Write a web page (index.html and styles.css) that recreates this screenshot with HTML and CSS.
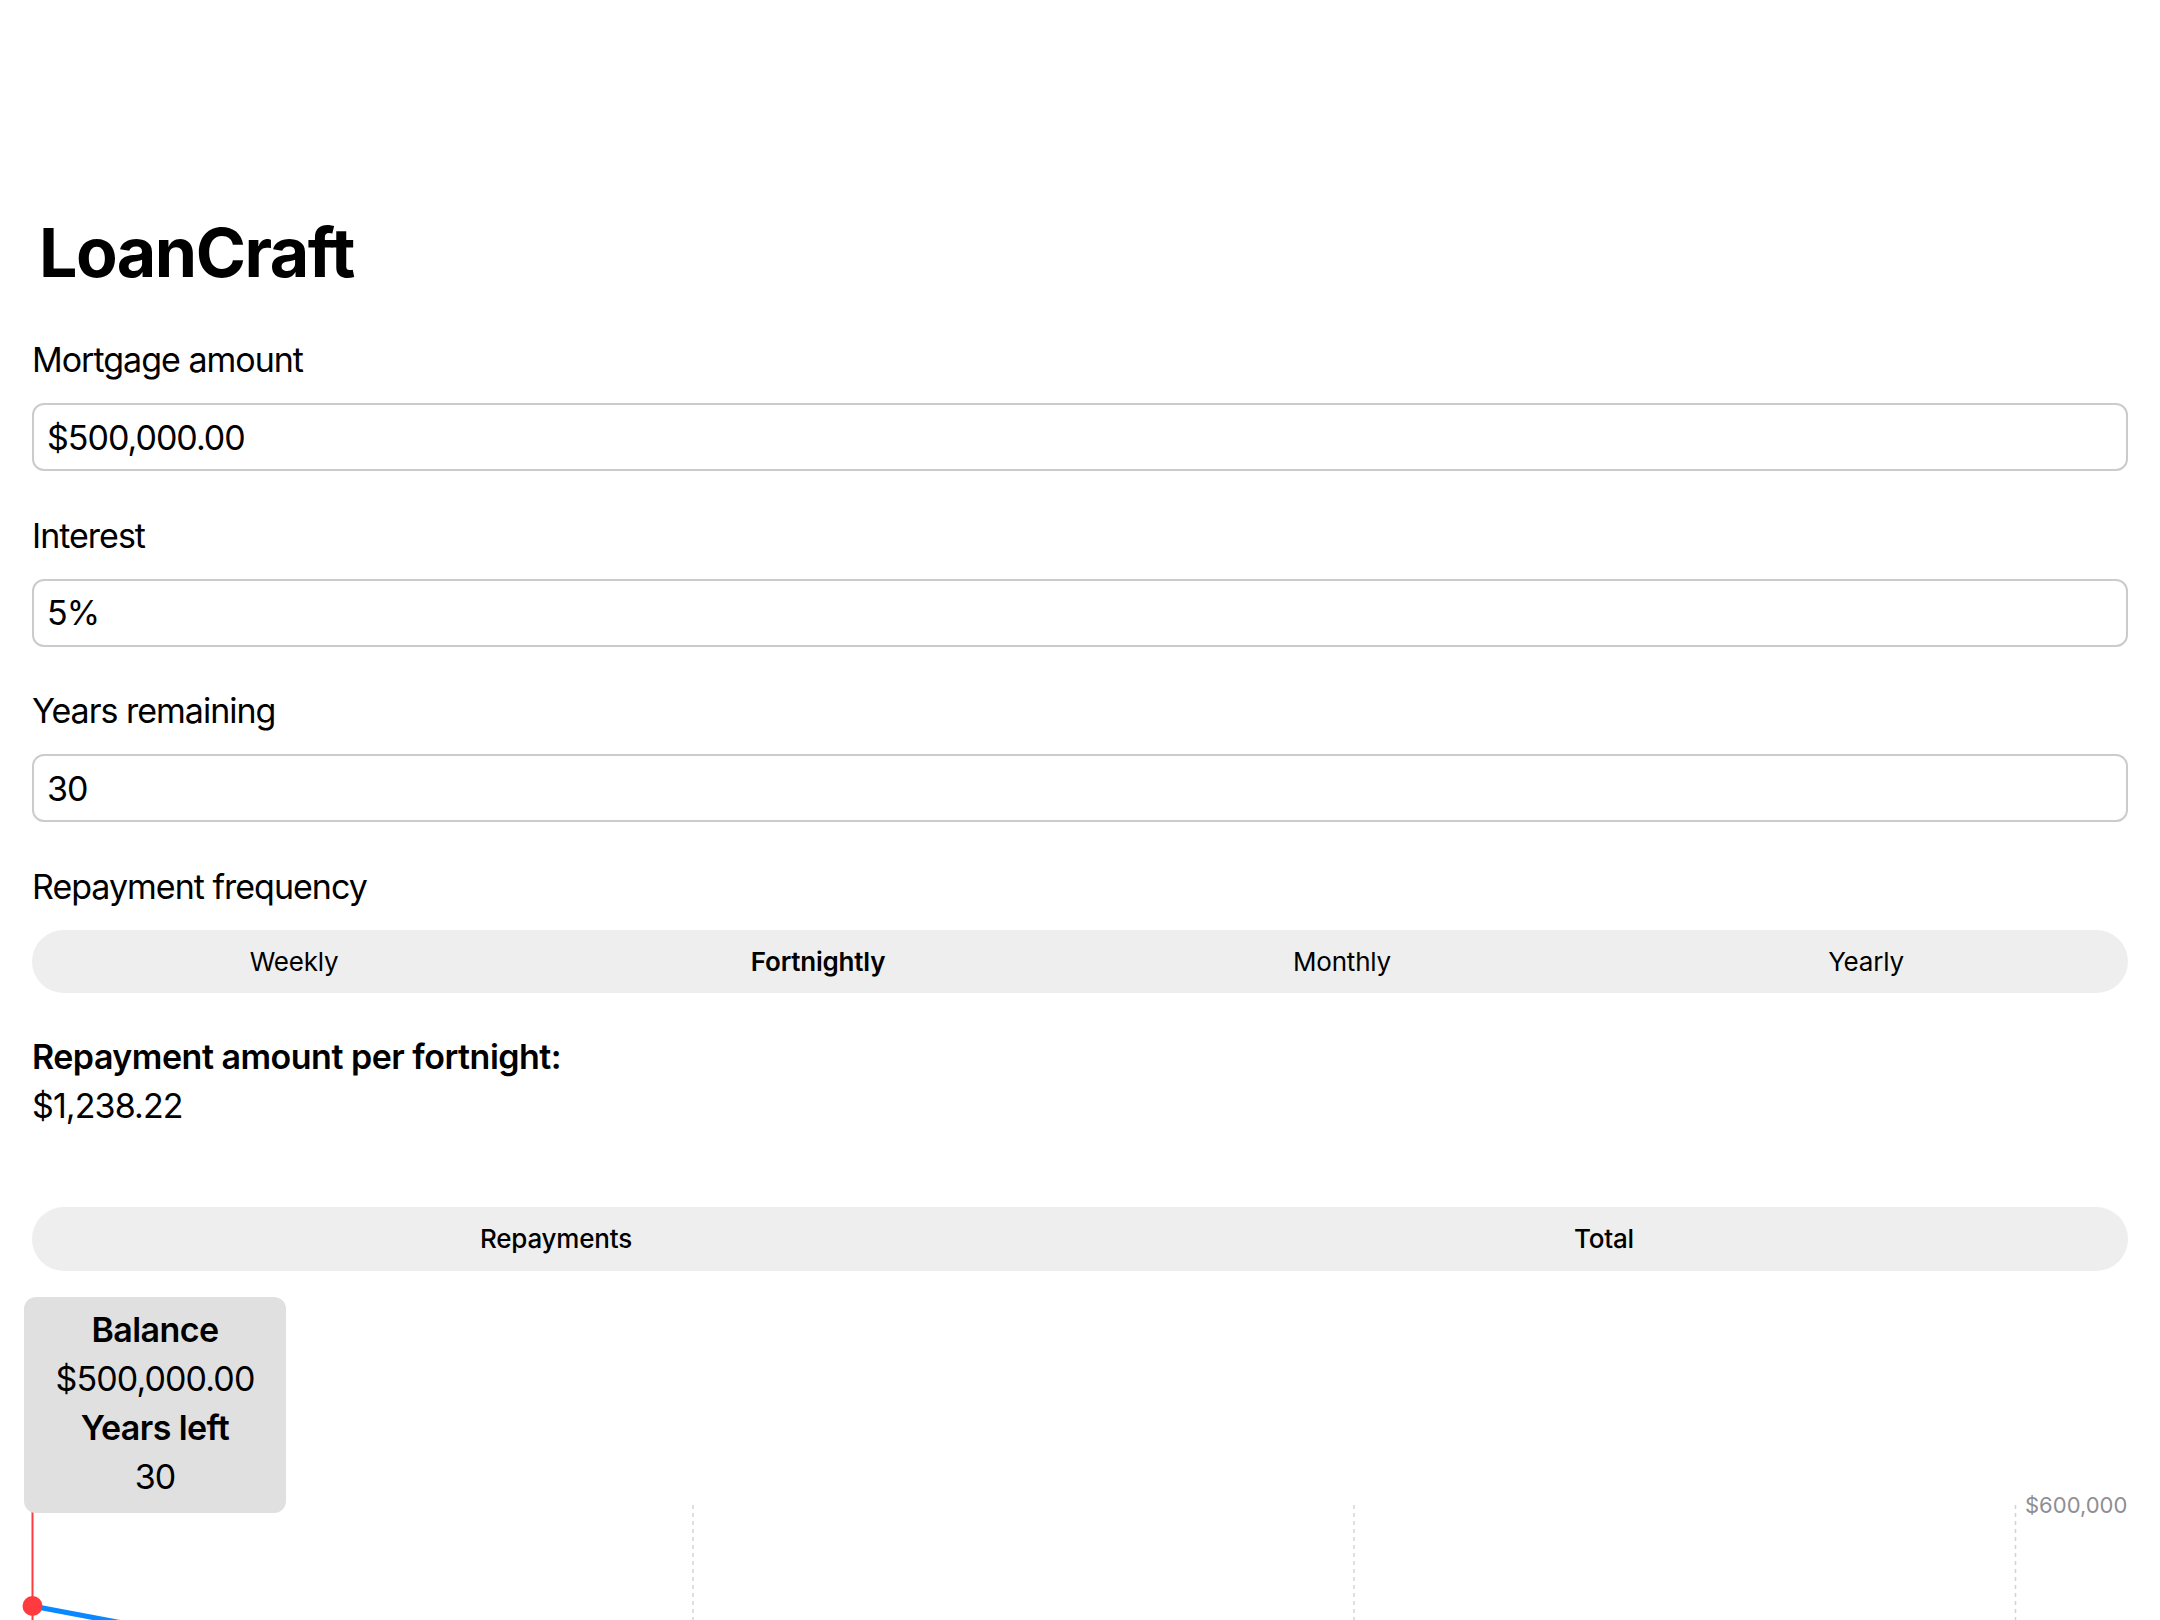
FILE: index.html
```html
<!DOCTYPE html>
<html lang="en">
<head>
<meta charset="utf-8">
<title>LoanCraft</title>
<link rel="stylesheet" href="styles.css">
</head>
<body>
<main class="page">
  <h1 class="title">LoanCraft</h1>

  <section class="field">
    <label class="label" for="amount">Mortgage amount</label>
    <input class="input" id="amount" type="text" value="$500,000.00">
  </section>

  <section class="field">
    <label class="label" for="interest">Interest</label>
    <input class="input" id="interest" type="text" value="5%">
  </section>

  <section class="field">
    <label class="label" for="years">Years remaining</label>
    <input class="input" id="years" type="text" value="30">
  </section>

  <section class="field">
    <div class="label">Repayment frequency</div>
    <div class="segmented">
      <div class="segment">Weekly</div>
      <div class="segment selected">Fortnightly</div>
      <div class="segment">Monthly</div>
      <div class="segment">Yearly</div>
    </div>
  </section>

  <section class="result">
    <div class="result-title">Repayment amount per fortnight:</div>
    <div class="result-value">$1,238.22</div>
  </section>

  <div class="segmented segmented-chart">
    <div class="segment selected-plain">Repayments</div>
    <div class="segment selected-plain">Total</div>
  </div>

  <section class="chart">
    <div class="tooltip">
      <div class="tip-strong">Balance</div>
      <div class="tip-value">$500,000.00</div>
      <div class="tip-strong">Years left</div>
      <div class="tip-value">30</div>
    </div>
    <svg class="plot" width="2096" height="660" viewBox="0 0 2096 660" xmlns="http://www.w3.org/2000/svg">
      <g stroke="#d3d3d3" stroke-width="1.5" stroke-dasharray="4 4">
        <line x1="661" y1="15" x2="661" y2="621"/>
        <line x1="1322" y1="15" x2="1322" y2="621"/>
        <line x1="1983.5" y1="15" x2="1983.5" y2="621"/>
      </g>
      <text x="1993" y="23" class="axis-label">$600,000</text>
      <line x1="0.5" y1="15" x2="0.5" y2="640" stroke="#ff3b3f" stroke-width="2"/>
      <polyline fill="none" stroke="#0a88ff" stroke-width="5" stroke-linejoin="round" stroke-linecap="round"
        points="0,116 85,132 330,168 661,220 991,286 1322,370 1652,480 1983,621"/>
      <circle cx="0.5" cy="116" r="10" fill="#ff3b3f"/>
    </svg>
  </section>
</main>
</body>
</html>
```

FILE: styles.css
```css
* {
  box-sizing: border-box;
}

html, body {
  margin: 0;
  padding: 0;
  background: #ffffff;
}

body {
  font-family: Inter, "Liberation Sans", sans-serif;
  color: #000000;
}

.page {
  padding: 211px 32px 0 32px;
  display: flex;
  flex-direction: column;
}

.title {
  margin: 0 0 47px 7px;
  font-size: 68px;
  line-height: 82px;
  font-weight: 700;
  letter-spacing: -1.5px;
}

.field {
  display: flex;
  flex-direction: column;
  margin-bottom: 44.5px;
}

.field:nth-of-type(4) {
  margin-bottom: 39px;
}

.label {
  display: block;
  font-size: 34px;
  line-height: 40px;
  margin-bottom: 23px;
  letter-spacing: -1px;
}

.input {
  display: block;
  width: 100%;
  height: 68px;
  margin: 0;
  padding: 0 13px;
  border: 2px solid #cbcbcb;
  border-radius: 12px;
  background: #ffffff;
  font-family: Inter, "Liberation Sans", sans-serif;
  font-size: 34px;
  color: #000000;
  letter-spacing: -1px;
  outline: none;
}

.segmented {
  display: flex;
  height: 63px;
  border-radius: 32px;
  background: #eeeeee;
}

.segment {
  flex: 1 1 0;
  display: flex;
  align-items: center;
  justify-content: center;
  font-size: 26px;
  font-weight: 400;
  letter-spacing: -0.2px;
}

.segment.selected {
  font-weight: 600;
}

.result {
  display: flex;
  flex-direction: column;
  margin-bottom: 77px;
}

.result-title {
  font-size: 34px;
  line-height: 49px;
  font-weight: 600;
  letter-spacing: -0.5px;
}

.result-value {
  font-size: 34px;
  line-height: 49px;
  letter-spacing: -0.9px;
}

.segmented-chart {
  height: 64px;
}

.segment.selected-plain {
  font-weight: 500;
}

.chart {
  position: relative;
  margin-top: 26px;
  padding-top: 193px;
}

.plot {
  display: block;
  overflow: visible;
}

.axis-label {
  font-family: Inter, "Liberation Sans", sans-serif;
  font-size: 22px;
  fill: #8e8e93;
}

.tooltip {
  position: absolute;
  top: 0;
  left: -8px;
  z-index: 2;
  width: 262px;
  padding: 8px 0 12px 0;
  border-radius: 12px;
  background: #e0e0e0;
  text-align: center;
}

.tip-strong {
  font-size: 34px;
  line-height: 49px;
  font-weight: 600;
  letter-spacing: -0.6px;
}

.tip-value {
  font-size: 34px;
  line-height: 49px;
  letter-spacing: -0.9px;
}
```
